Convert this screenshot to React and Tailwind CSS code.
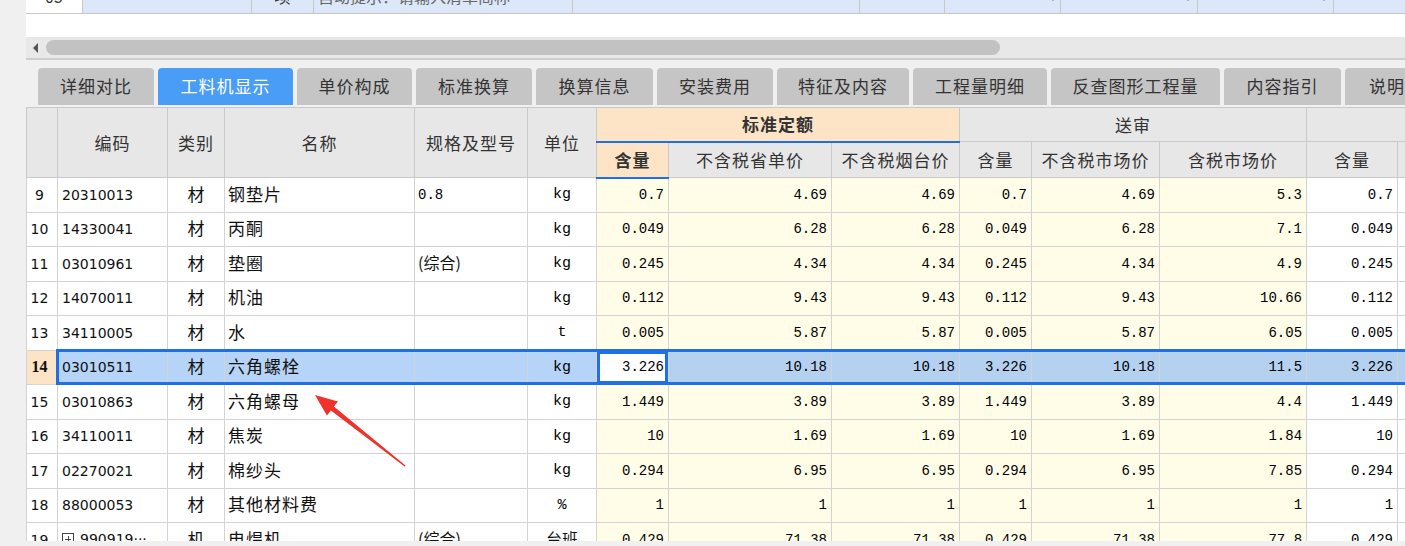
import React from "react";

const colWidths = [
  "w-[31px]", "w-[110px]", "w-[57px]", "w-[190px]", "w-[113px]", "w-[69px]",
  "w-[72px]", "w-[163px]", "w-[128px]", "w-[72px]", "w-[128px]", "w-[147px]",
  "w-[91px]", "w-[63px]",
];

const rows = [
  ["9", "20310013", "材", "钢垫片", "0.8", "kg", "0.7", "4.69", "4.69", "0.7", "4.69", "5.3", "0.7"],
  ["10", "14330041", "材", "丙酮", "", "kg", "0.049", "6.28", "6.28", "0.049", "6.28", "7.1", "0.049"],
  ["11", "03010961", "材", "垫圈", "(综合)", "kg", "0.245", "4.34", "4.34", "0.245", "4.34", "4.9", "0.245"],
  ["12", "14070011", "材", "机油", "", "kg", "0.112", "9.43", "9.43", "0.112", "9.43", "10.66", "0.112"],
  ["13", "34110005", "材", "水", "", "t", "0.005", "5.87", "5.87", "0.005", "5.87", "6.05", "0.005"],
  ["14", "03010511", "材", "六角螺栓", "", "kg", "3.226", "10.18", "10.18", "3.226", "10.18", "11.5", "3.226"],
  ["15", "03010863", "材", "六角螺母", "", "kg", "1.449", "3.89", "3.89", "1.449", "3.89", "4.4", "1.449"],
  ["16", "34110011", "材", "焦炭", "", "kg", "10", "1.69", "1.69", "10", "1.69", "1.84", "10"],
  ["17", "02270021", "材", "棉纱头", "", "kg", "0.294", "6.95", "6.95", "0.294", "6.95", "7.85", "0.294"],
  ["18", "88000053", "材", "其他材料费", "", "%", "1", "1", "1", "1", "1", "1", "1"],
  ["19", "990919···", "机", "电焊机", "(综合)", "台班", "0.429", "71.38", "71.38", "0.429", "71.38", "77.8", "0.429"],
];

const tabs = [
  ["详细对比", "w-[116px]"],
  ["工料机显示", "w-[135px]"],
  ["单价构成", "w-[115px]"],
  ["标准换算", "w-[116px]"],
  ["换算信息", "w-[117px]"],
  ["安装费用", "w-[116px]"],
  ["特征及内容", "w-[132px]"],
  ["工程量明细", "w-[134px]"],
  ["反查图形工程量", "w-[169px]"],
  ["内容指引", "w-[117px]"],
  ["说明信息", "w-[120px]"],
];

const topCells = [
  ["w-[57px] bg-white justify-center", "05"],
  ["w-[169px]", ""],
  ["w-[62px] justify-center", "项"],
  ["w-[259px] pl-[4px] text-[#666]", "自动提示：请输入清单简称"],
  ["w-[287px]", ""],
  ["w-[85px]", ""],
  ["w-[116px] justify-end pr-[4px]", "▾"],
  ["w-[137px] justify-end pr-[6px]", "▾"],
  ["w-[136px] justify-end pr-[6px]", "▾"],
  ["w-[100px]", ""],
];

const th = "p-0 pb-[1px] border border-[#c9c9c9] bg-[#e7e7e7] font-normal text-[#333] text-[17px] tracking-[1px] whitespace-nowrap overflow-hidden";
const peach = "bg-[#fde4c6]";
const td = "p-0 border border-[#d3d3d3] whitespace-nowrap overflow-hidden";
const mono = "font-['Liberation_Mono',monospace] text-[14px] text-black";
const num = `${td} ${mono} text-right pr-[4px]`;

function DataRow({ r }) {
  const sel = r[0] === "14";
  const left = sel ? "bg-[#b5d4f7]" : "bg-white";
  const yel = sel ? "bg-[#b4d2f0]" : "bg-[#fffde8]";
  const last = sel ? "bg-[#b4d2f0]" : "bg-white";
  return (
    <tr className="h-[34.5px] text-[#111]">
      <td
        className={`${td} ${
          sel
            ? "bg-[#fde4c6] font-['Liberation_Serif',serif] font-bold text-[16px]"
            : "bg-white font-['DejaVu_Sans',sans-serif] text-[14px]"
        } text-center pr-[5px]`}
      >
        {r[0]}
      </td>
      <td className={`${td} ${left} font-['DejaVu_Sans',sans-serif] text-[14px] pl-[4px]`}>
        {r[0] === "19" ? (
          <span className="inline-flex items-center gap-[6px]">
            <span className="relative inline-block w-[12px] h-[12px] border border-[#444]">
              <span className="absolute left-[2px] right-[2px] top-[4.5px] h-px bg-[#444]" />
              <span className="absolute top-[2px] bottom-[2px] left-[4.5px] w-px bg-[#444]" />
            </span>
            {r[1]}
          </span>
        ) : (
          r[1]
        )}
      </td>
      <td className={`${td} ${left} text-center text-[17px] pb-[3px]`}>{r[2]}</td>
      <td className={`${td} ${left} pl-[3px] text-[17px] tracking-[1px] pb-[3px]`}>{r[3]}</td>
      <td className={`${td} ${left} pl-[3px] ${r[4] === "0.8" ? mono : "text-[16px] pb-[3px]"}`}>{r[4]}</td>
      <td
        className={`${td} ${left} text-center ${
          r[5] === "台班" ? "text-[16px] pb-[3px]" : "font-['Liberation_Mono',monospace] text-[15px] text-black"
        }`}
      >
        {r[5]}
      </td>
      <td className={`${num} ${sel ? "bg-white shadow-[inset_0_0_0_3px_#1f6fe5]" : yel}`}>{r[6]}</td>
      <td className={`${num} ${yel}`}>{r[7]}</td>
      <td className={`${num} ${yel}`}>{r[8]}</td>
      <td className={`${num} ${yel}`}>{r[9]}</td>
      <td className={`${num} ${yel}`}>{r[10]}</td>
      <td className={`${num} ${yel}`}>{r[11]}</td>
      <td className={`${num} ${last}`}>{r[12]}</td>
      <td className={`${td} ${last}`} />
    </tr>
  );
}

export default function App() {
  return (
    <div className="relative w-[1405px] h-[546px] overflow-hidden flex bg-[#f0f0f0] font-['Noto_Sans_CJK_SC','Noto_Sans',sans-serif] leading-none">
      <div className="w-[26px] shrink-0 bg-[#f0f0f0]" />
      <div className="flex-1 min-w-0 flex flex-col">
        {/* list row scrolled above the view */}
        <div className="h-[14px] overflow-hidden border-b border-[#c8c8c8] bg-white">
          <div className="flex h-[34px] -mt-[21px] text-[16px] text-[#333]">
            {topCells.map(([cls, text], i) => (
              <div
                key={i}
                className={`${cls} shrink-0 flex items-center border-r border-[#c8c8c8] ${
                  i === 0 ? "" : "bg-[#dce8fa]"
                } ${text === "▾" ? "text-[12px] text-[#222]" : ""}`}
              >
                {text}
              </div>
            ))}
          </div>
        </div>
        <div className="h-[23px] bg-white" />

        {/* horizontal scrollbar */}
        <div className="h-[23px] bg-[#e8e8e8] border-b-2 border-[#cdcdcd] flex items-center">
          <div className="ml-[7px] w-0 h-0 border-y-[5px] border-y-transparent border-r-[5px] border-r-[#555]" />
          <div className="ml-[8px] w-[954px] h-[15px] rounded-full bg-[#c2c2c2]" />
        </div>

        {/* tabs */}
        <div className="h-[47px] flex items-start pt-[8px] pl-[12px] gap-[4px] overflow-hidden">
          {tabs.map(([label, w], i) => (
            <div
              key={label}
              className={`${w} shrink-0 h-[37px] pb-[2px] rounded-t-[4px] flex items-center justify-center text-[17px] tracking-[1px] ${
                i === 1 ? "bg-[#4a9df6] text-white" : "bg-[#c5c5c5] text-[#333]"
              }`}
            >
              {label}
            </div>
          ))}
        </div>

        {/* grid */}
        <div className="relative h-[434px] overflow-hidden">
          <table className="table-fixed border-collapse w-[1434px]">
            <colgroup>
              {colWidths.map((w, i) => (
                <col key={i} className={w} />
              ))}
            </colgroup>
            <thead>
              <tr className="h-[34px]">
                <th rowSpan={2} className={th} />
                <th rowSpan={2} className={th}>编码</th>
                <th rowSpan={2} className={th}>类别</th>
                <th rowSpan={2} className={th}>名称</th>
                <th rowSpan={2} className={th}>规格及型号</th>
                <th rowSpan={2} className={th}>单位</th>
                <th colSpan={3} className={`${th} ${peach} !font-bold border-b-2 border-b-[#1f6fe5]`}>
                  标准定额
                </th>
                <th colSpan={3} className={th}>送审</th>
                <th colSpan={2} className={th} />
              </tr>
              <tr className="h-[36px]">
                <th className={`${th} ${peach} !font-bold border-b-2 border-b-[#1f6fe5]`}>含量</th>
                <th className={th}>不含税省单价</th>
                <th className={th}>不含税烟台价</th>
                <th className={th}>含量</th>
                <th className={th}>不含税市场价</th>
                <th className={th}>含税市场价</th>
                <th className={th}>含量</th>
                <th className={th} />
              </tr>
            </thead>
            <tbody>
              {rows.map((r) => (
                <DataRow key={r[0]} r={r} />
              ))}
            </tbody>
          </table>
          {/* selected row frame */}
          <div className="absolute left-[30px] top-[242px] w-[1420px] h-[36px] border-[3px] border-[#1f6fe5] pointer-events-none" />
        </div>
      </div>

      {/* annotation arrow */}
      <svg
        className="absolute left-0 top-0 pointer-events-none"
        width="1405"
        height="546"
        viewBox="0 0 1405 546"
      >
        <polygon
          points="315,395 338,401.4 333.9,406.5 405.5,465.4 404.5,466.6 330.9,410.5 326.9,415.6"
          fill="#f1322b"
        />
      </svg>
    </div>
  );
}
